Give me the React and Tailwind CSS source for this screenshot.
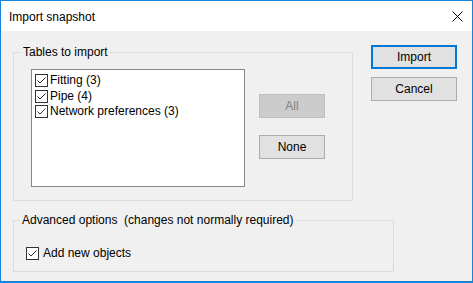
import React from "react";

const font = { fontFamily: '"Liberation Sans", Arial, sans-serif' };

function Check({ className = "" }) {
  return (
    <svg width="13" height="13" viewBox="0 0 13 13" className={"shrink-0 " + className}>
      <rect x="0.5" y="0.5" width="12" height="12" fill="#fff" stroke="#333" />
      <path d="M2.5 6.5 L5 9 L10.5 3.5" fill="none" stroke="#333" strokeWidth="1" />
    </svg>
  );
}

function Btn({ children, disabled, primary, className = "" }) {
  const base = "flex items-center justify-center h-[24px] text-[12px] ";
  if (disabled)
    return <div className={base + "bg-[#cccccc] border border-[#bfbfbf] text-[#838383] " + className}>{children}</div>;
  if (primary)
    return <div className={base + "bg-[#e1e1e1] border-2 border-[#0078d7] text-black " + className}>{children}</div>;
  return <div className={base + "bg-[#e1e1e1] border border-[#adadad] text-black " + className}>{children}</div>;
}

export default function App() {
  const rows = ["Fitting (3)", "Pipe (4)", "Network preferences (3)"];
  return (
    <div className="w-[473px] h-[283px] bg-white text-black text-[12px]" style={font}>
      <div className="h-full flex flex-col border border-b-2 border-[#1883d7]">
        {/* title bar */}
        <div className="h-[30px] shrink-0 flex items-center justify-between bg-white pl-[8px] pr-[9px]">
          <span className="text-[12px] mt-[1px]">Import snapshot</span>
          <svg width="11" height="11" viewBox="0 0 11 11">
            <path d="M0.5 0.5 L10.5 10.5 M10.5 0.5 L0.5 10.5" stroke="#000" strokeWidth="1" />
          </svg>
        </div>

        <div className="flex-1 bg-[#f0f0f0] pl-[12px] pt-[14px]">
          <div className="flex items-start">
            <fieldset className="w-[340px] h-[156px] border border-[#dcdcdc]">
              <legend className="ml-[7px] px-[2px] leading-[15px]">Tables to import</legend>
              <div className="flex items-start mt-[9px] pl-[17px]">
                <div className="w-[214px] h-[118px] bg-white border border-[#828790] pl-[3px] pt-[3px]">
                  {rows.map(r => (
                    <div key={r} className="flex items-center h-[15.5px] gap-[2px]">
                      <Check />
                      <span className="leading-[15px]">{r}</span>
                    </div>
                  ))}
                </div>
                <div className="ml-[14px] mt-[25px] flex flex-col gap-[17px]">
                  <Btn disabled className="w-[66px]">All</Btn>
                  <Btn className="w-[66px]">None</Btn>
                </div>
              </div>
            </fieldset>
            <div className="ml-[18px] flex flex-col gap-[8px]">
              <Btn primary className="w-[86px]">Import</Btn>
              <Btn className="w-[86px]">Cancel</Btn>
            </div>
          </div>

          <fieldset className="mt-[12px] w-[381px] h-[59px] border border-[#dcdcdc]">
            <legend className="ml-[6px] px-[2px] leading-[15px] whitespace-pre">Advanced options  (changes not normally required)</legend>
            <div className="flex items-center gap-[4px] mt-[18px] pl-[12px]">
              <Check />
              <span className="leading-[15px]">Add new objects</span>
            </div>
          </fieldset>
        </div>
      </div>
    </div>
  );
}
